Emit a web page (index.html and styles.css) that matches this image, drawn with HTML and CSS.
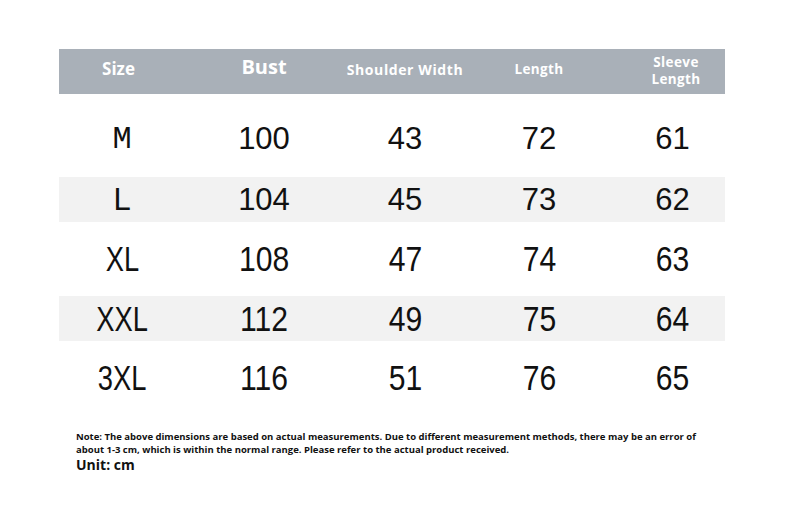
FILE: index.html
```html
<!DOCTYPE html>
<html>
<head>
<meta charset="utf-8">
<link rel="stylesheet" href="styles.css">
</head>
<body>
<div class="page">
  <div class="table">
    <div class="row head">
      <div class="cell c1"><span class="h-size">Size</span></div>
      <div class="cell c2"><span class="h-bust">Bust</span></div>
      <div class="cell c3"><span class="h-sm h-wide">Shoulder Width</span></div>
      <div class="cell c4"><span class="h-sm">Length</span></div>
      <div class="cell c5"><span class="h-sm h-two">Sleeve<br>Length</span></div>
    </div>
    <div class="row wide lift">
      <div class="cell c1"><span class="mono">M</span></div>
      <div class="cell c2">100</div>
      <div class="cell c3">43</div>
      <div class="cell c4">72</div>
      <div class="cell c5">61</div>
    </div>
    <div class="row wide shade">
      <div class="cell c1">L</div>
      <div class="cell c2">104</div>
      <div class="cell c3">45</div>
      <div class="cell c4">73</div>
      <div class="cell c5">62</div>
    </div>
    <div class="row narrow">
      <div class="cell c1"><span class="cond cond-size">XL</span></div>
      <div class="cell c2"><span class="cond">108</span></div>
      <div class="cell c3"><span class="cond">47</span></div>
      <div class="cell c4"><span class="cond">74</span></div>
      <div class="cell c5"><span class="cond">63</span></div>
    </div>
    <div class="row narrow shade">
      <div class="cell c1"><span class="cond cond-size">XXL</span></div>
      <div class="cell c2"><span class="cond">112</span></div>
      <div class="cell c3"><span class="cond">49</span></div>
      <div class="cell c4"><span class="cond">75</span></div>
      <div class="cell c5"><span class="cond">64</span></div>
    </div>
    <div class="row narrow">
      <div class="cell c1"><span class="cond cond-size">3XL</span></div>
      <div class="cell c2"><span class="cond">116</span></div>
      <div class="cell c3"><span class="cond">51</span></div>
      <div class="cell c4"><span class="cond">76</span></div>
      <div class="cell c5"><span class="cond">65</span></div>
    </div>
  </div>
  <div class="note">
    <p class="note-text">Note: The above dimensions are based on actual measurements. Due to different measurement methods, there may be an error of<br>about 1-3 cm, which is within the normal range. Please refer to the actual product received.</p>
    <p class="unit">Unit: cm</p>
  </div>
</div>
</body>
</html>
```

FILE: styles.css
```css
html, body {
  margin: 0;
  padding: 0;
  background: #ffffff;
}

.page {
  width: 790px;
  height: 511px;
  padding: 49px 0 0 59px;
  box-sizing: border-box;
  font-family: "Liberation Sans", Arial, sans-serif;
  color: #111111;
}

.table {
  width: 666px;
  display: flex;
  flex-direction: column;
  gap: 14.5px;
}

.row {
  display: grid;
  grid-template-columns: 126px 158px 124px 144px 114px;
  height: 45px;
  align-items: center;
}

.head {
  background: #a9b0b8;
  color: #ffffff;
  font-family: "Open Sans", sans-serif;
  font-weight: 700;
  margin-bottom: 8.5px;
}

.cell {
  text-align: center;
  line-height: 1;
  white-space: nowrap;
}

.c5 {
  padding-left: 9px;
}

.head .c1 {
  padding-right: 7px;
}

.head .c5 {
  padding-left: 16px;
}

.h-size {
  font-size: 17px;
  display: inline-block;
  position: relative;
  top: -3px;
}

.h-bust {
  font-size: 20px;
  display: inline-block;
  position: relative;
  top: -5px;
}

.h-sm {
  font-size: 13.5px;
  letter-spacing: 0.4px;
  display: inline-block;
  position: relative;
  top: -3px;
}

.h-wide {
  font-size: 14px;
  letter-spacing: 0.6px;
}

.h-two {
  line-height: 17px;
  top: -1px;
  text-align: center;
}

.shade {
  background: #f2f2f2;
}

.wide .cell {
  font-size: 31px;
}

.lift .cell {
  position: relative;
  top: -1px;
}

.mono {
  font-family: "Liberation Mono", monospace;
  font-size: 32px;
}

.narrow .cell {
  font-size: 35px;
}

.cond {
  display: inline-block;
  transform: scaleX(0.86);
}

.cond-size {
  transform: scaleX(0.78);
}

.note {
  margin: 30px 0 0 17px;
  font-family: "Open Sans", sans-serif;
  font-weight: 700;
  color: #111111;
}

.note-text {
  margin: 0;
  font-size: 9.5px;
  line-height: 13px;
  letter-spacing: 0;
}

.unit {
  margin: 0;
  font-size: 14px;
  line-height: 18px;
}
```
